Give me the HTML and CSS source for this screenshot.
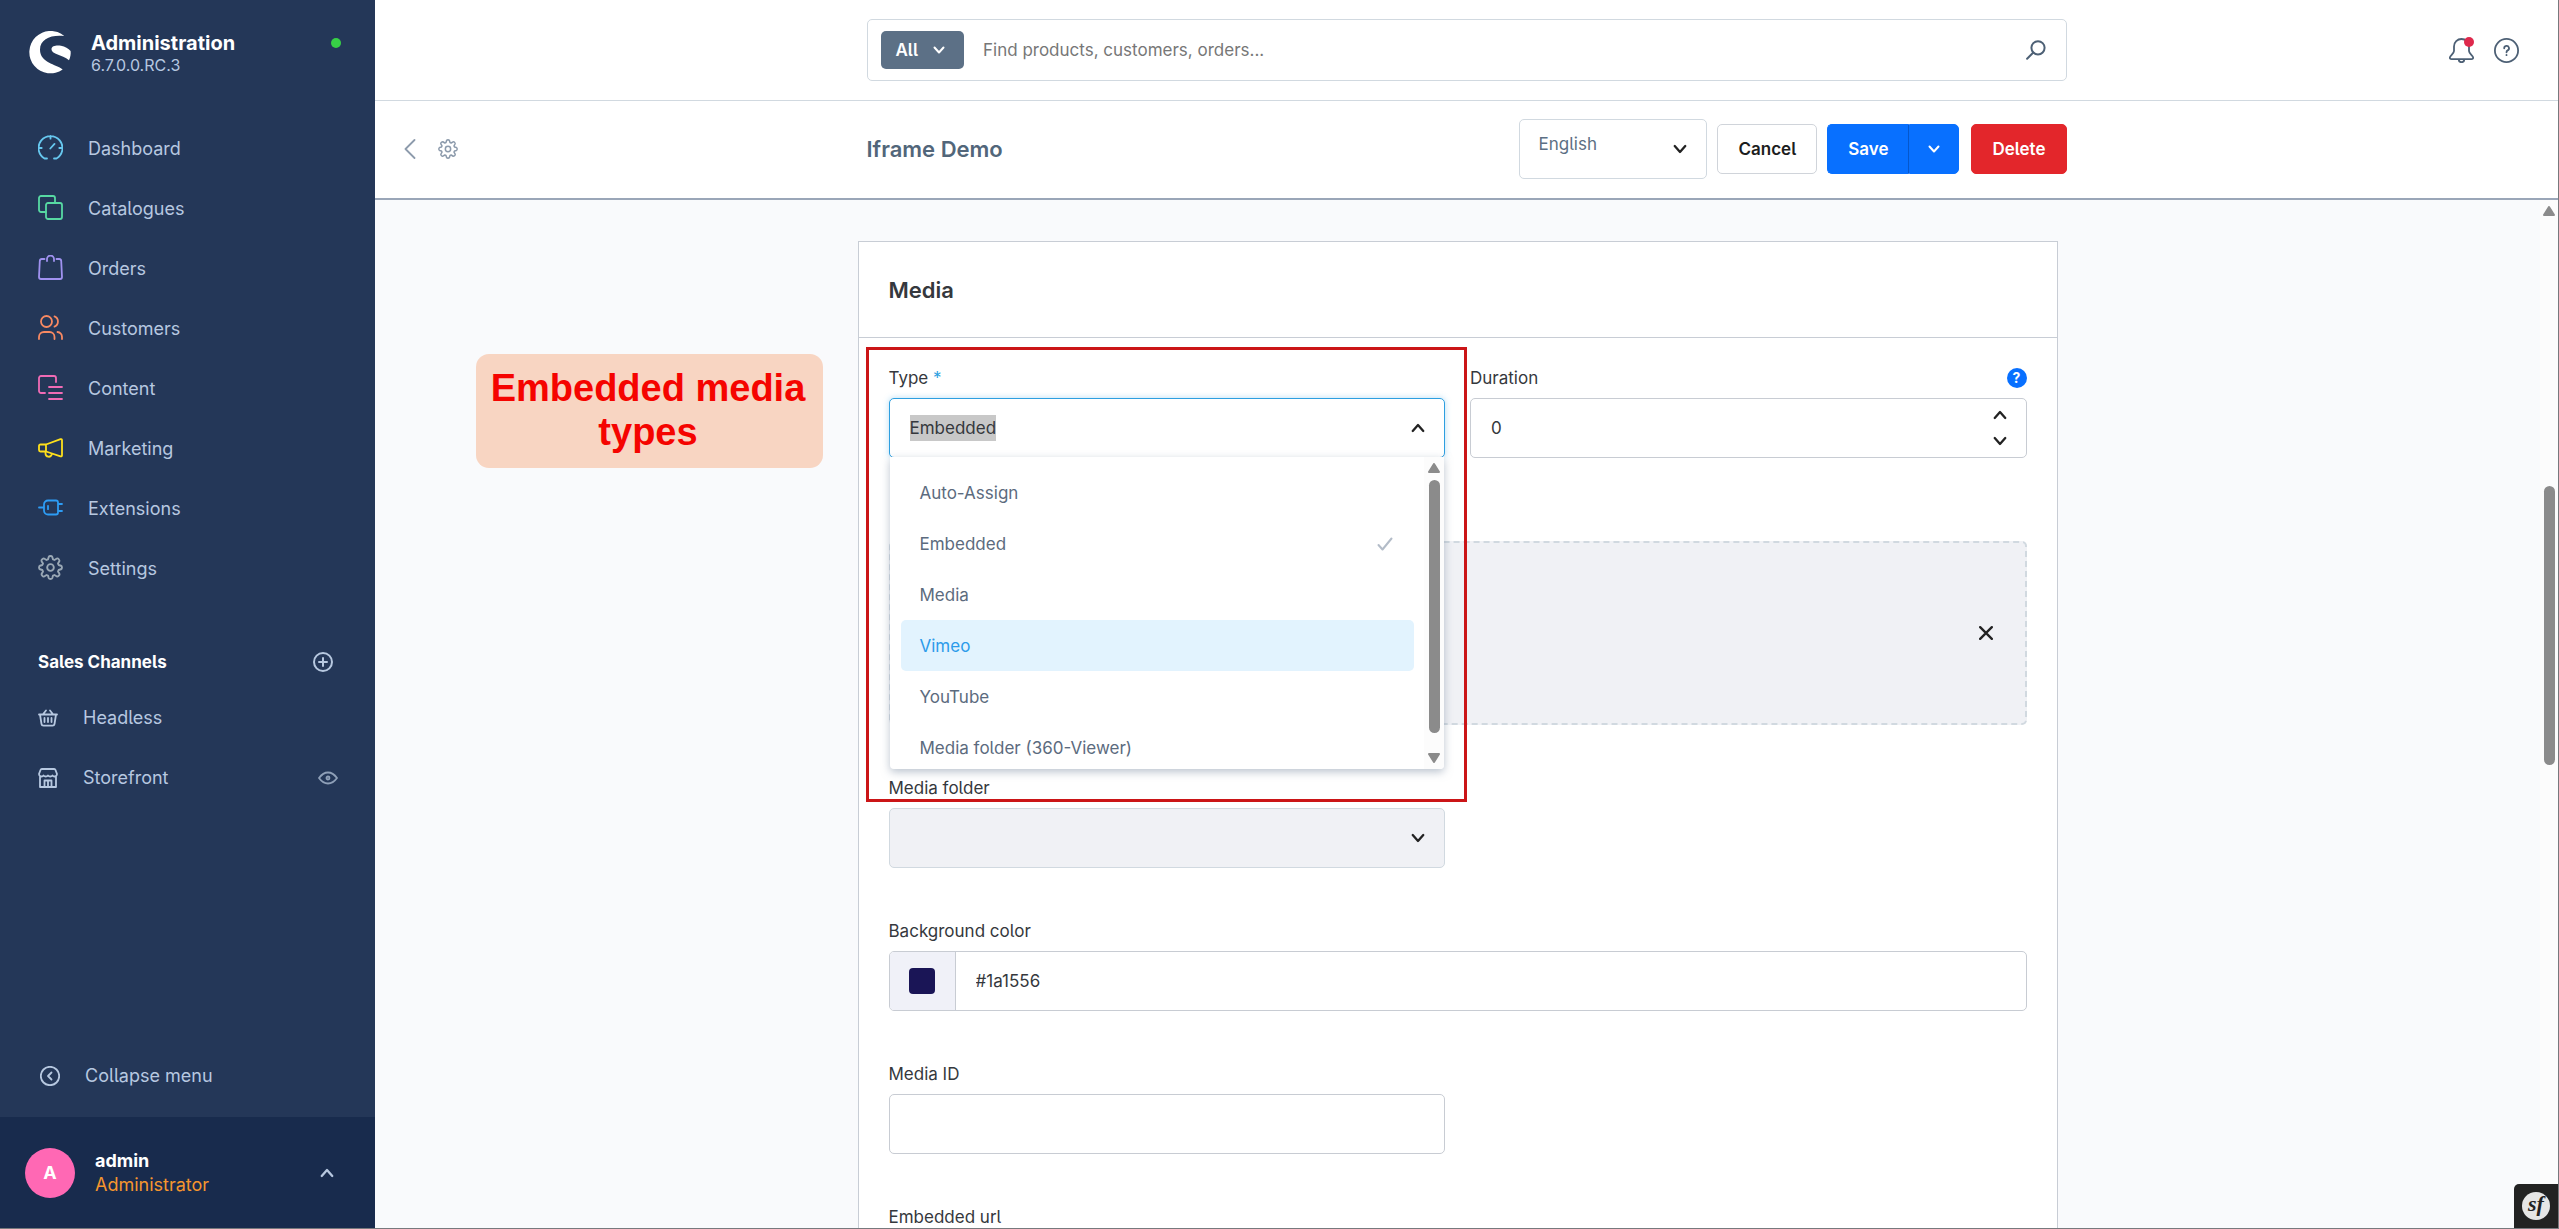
FILE: index.html
```html
<!DOCTYPE html>
<html lang="en">

<head>
    <meta charset="utf-8">
    <title>Iframe Demo | Administration</title>
    <link rel="stylesheet" href="styles.css">
</head>

<body>
    <svg class="sprite" aria-hidden="true">
        <symbol id="gear" viewBox="0 0 24 24">
            <path d="M9.6 4.2 10.3 1.9Q10.7 1 12 1t1.7.9l.7 2.3 1.4.6 2.3-1.4q.9-.5 1.8.7t.7 1.6l-1.4 2.5.6 1.4 2.3.7q.9.4.9 1.7t-.9 1.7l-2.3.7-.6 1.4 1.4 2.3q.5.9-.7 1.9t-1.7.7l-2.4-1.5-1.4.6-.7 2.3q-.4.9-1.7.9t-1.7-.9l-.7-2.3-1.4-.6-2.3 1.4q-.9.5-1.8-.7t-.7-1.6l1.4-2.5-.6-1.4-2.3-.7Q1 13.3 1 12t.9-1.7l2.3-.7.6-1.4-1.4-2.3q-.5-.9.7-1.9t1.7-.7l2.4 1.5z"/>
            <circle cx="12" cy="12" r="3.2"/>
        </symbol>
        <symbol id="chevron-down" viewBox="0 0 12 12"><path d="M1.5 3.5 6 8.5l4.5-5"/></symbol>
        <symbol id="chevron-up" viewBox="0 0 12 12"><path d="M1.5 8.5 6 3.5l4.5 5"/></symbol>
    </svg>

    <aside class="sidebar">
        <div class="brand">
            <svg class="logo" viewBox="0 0 42 43">
                <path d="M35.3 5A21.2 21.2 0 1 0 33.7 38.5C27 33 11 32 11 18.5 11 8 22 3.5 35.3 5z"/>
                <path d="M22.5 18c0-3 5-4 9.500-3.200 4 .8 7.500 2.700 9.600 5.200.4 3-.2 6-1.600 9.300-3.500-3-8-4.300-12-6-3-1.300-5.500-2.700-5.500-5.300z"/>
            </svg>
            <div class="brand-text">
                <strong>Administration</strong>
                <span>6.7.0.0.RC.3</span>
            </div>
            <i class="status"></i>
        </div>

        <nav class="menu">
            <a href="#" class="menu-item">
                <svg class="icon dashboard" viewBox="0 0 25 25"><path d="M9 23.500H6.500a12 12 0 1 1 12 0H16M12.500 1v2.700M1 13h2.700M21.300 13H24M12.300 13.500l4.200-4.600"/></svg>
                Dashboard
            </a>
            <a href="#" class="menu-item">
                <svg class="icon catalogues" viewBox="0 0 25 25"><path d="M8 17H3a2 2 0 0 1-2-2V3a2 2 0 0 1 2-2h12a2 2 0 0 1 2 2v5"/><rect x="8" y="8" width="16" height="16" rx="2"/></svg>
                Catalogues
            </a>
            <a href="#" class="menu-item">
                <svg class="icon orders" viewBox="0 0 25 25"><path d="M6.500 4H3.800a2 2 0 0 0-2 1.800L1 22a2 2 0 0 0 2 2h19a2 2 0 0 0 2-2L23.200 5.800a2 2 0 0 0-2-1.800h-2.700M9 6V4a3.500 3.500 0 0 1 7 0v2"/></svg>
                Orders
            </a>
            <a href="#" class="menu-item">
                <svg class="icon customers" viewBox="0 0 25 25"><circle cx="8.500" cy="6.500" r="5.500"/><path d="M1 24v-2a5 5 0 0 1 5-5h5.500a5 5 0 0 1 5 5v2M16.500 1.400a5.500 5.500 0 0 1 0 10.200M19.500 17a5 5 0 0 1 4.500 5v2"/></svg>
                Customers
            </a>
            <a href="#" class="menu-item">
                <svg class="icon contents" viewBox="0 0 25 25"><path d="M7 18H3a2 2 0 0 1-2-2V3a2 2 0 0 1 2-2h13a2 2 0 0 1 2 2v4M11 12h13M11 18h13M11 24h13"/></svg>
                Content
            </a>
            <a href="#" class="menu-item">
                <svg class="icon marketing" viewBox="0 0 25 25"><path d="M8 9.500 22.500 4.200Q24 3.800 24 5.300v14.900q0 1.500-1.500 1.100L8 16.500zM8 9.500H2.500Q1 9.500 1 11v4q0 1.500 1.500 1.500H8M7.500 16.800v1.700a3.200 3.200 0 0 0 6.300.8"/></svg>
                Marketing
            </a>
            <a href="#" class="menu-item">
                <svg class="icon extensions" viewBox="0 0 25 25"><path d="M1 12.500h5M10 5.500h8a2 2 0 0 1 2 2v10a2 2 0 0 1-2 2h-8a4 4 0 0 1-4-4v-6a4 4 0 0 1 4-4zM20 9h4M20 16h4M10 10.800v3.400"/></svg>
                Extensions
            </a>
            <a href="#" class="menu-item">
                <svg class="icon settings"><use href="#gear"/></svg>
                Settings
            </a>
        </nav>

        <div class="channels-head">
            <h2>Sales Channels</h2>
            <button class="plain" aria-label="Add sales channel">
                <svg class="icon-sm bold" viewBox="0 0 20 20"><circle cx="10" cy="10" r="9"/><path d="M10 6v8M6 10h8"/></svg>
            </button>
        </div>
        <nav class="channels">
            <a href="#" class="menu-item">
                <svg class="icon-sm" viewBox="0 0 20 20"><path d="M1 6.500h18M2 6.500 3.500 16a2 2 0 0 0 2 1.700h9a2 2 0 0 0 2-1.700L18 6.500M5 6.200 8 2.500M15 6.200l-3-3.700M6.500 10v4M10 10v4M13.500 10v4"/></svg>
                Headless
            </a>
            <a href="#" class="menu-item">
                <svg class="icon-sm" viewBox="0 0 20 20"><path d="M1 6 2.500 2a1.500 1.500 0 0 1 1.400-1h12.200a1.500 1.500 0 0 1 1.400 1L19 6a2.500 2.500 0 0 1-4.500 1.500 3 3 0 0 1-4.500 0 3 3 0 0 1-4.500 0A2.500 2.500 0 0 1 1 6zM2 8.500V19h16V8.500M6.500 19v-6.500h7V19M10 12.500V19"/></svg>
                Storefront
                <svg class="icon-sm eye" viewBox="0 0 20 20"><path d="M1 10q4-5.500 9-5.500t9 5.500q-4 5.500-9 5.500T1 10z"/><circle cx="10" cy="10" r="1.500"/></svg>
            </a>
        </nav>

        <button class="menu-item collapse">
            <svg class="icon-sm" viewBox="0 0 20 20"><circle cx="10" cy="10" r="9.200"/><path d="M11.500 6.500 8 10l3.500 3.500"/></svg>
            Collapse menu
        </button>

        <button class="user">
            <span class="avatar">A</span>
            <span class="user-text">
                <strong>admin</strong>
                <span>Administrator</span>
            </span>
            <svg class="chevron"><use href="#chevron-up"/></svg>
        </button>
    </aside>

    <div class="page">
        <header class="topbar">
            <form class="search">
                <button type="button" class="search-type">All <svg class="chevron small"><use href="#chevron-down"/></svg></button>
                <input type="text" aria-label="Search" placeholder="Find products, customers, orders...">
                <button type="button" class="plain" aria-label="Start search">
                    <svg class="icon-sm glass" viewBox="0 0 20 20"><circle cx="12" cy="7.800" r="6.600"/><path d="m7.300 12.500-6.200 6.200"/></svg>
                </button>
            </form>
            <div class="topbar-actions">
                <button class="plain bell" aria-label="Notifications">
                    <svg class="icon" viewBox="0 0 25 25"><path d="M12.500 1A7.500 7.500 0 0 0 5 8.500V13c0 2.500-3.800 4.500-4.100 6.300-.2 1.200.5 1.900 1.600 1.900h20c1.100 0 1.800-.7 1.600-1.900C23.800 17.500 20 15.500 20 13V8.500A7.500 7.500 0 0 0 12.500 1zM9.800 21.500a2.700 2.700 0 0 0 5.400 0"/></svg>
                    <i class="badge"></i>
                </button>
                <button class="plain" aria-label="Help">
                    <svg class="icon" viewBox="0 0 25 25"><circle cx="12.500" cy="12.500" r="11.600"/><path d="M10.200 10.300a2.400 2.400 0 1 1 3.500 2.100q-1.200.6-1.200 1.900M12.500 16.800v.4"/></svg>
                </button>
            </div>
        </header>

        <div class="smartbar">
            <div class="smartbar-back">
                <a href="#" aria-label="Back"><svg class="icon-sm" viewBox="0 0 20 20"><path d="M14.500 1 5.500 10l9 9"/></svg></a>
                <a href="#" aria-label="Settings"><svg class="icon-sm"><use href="#gear"/></svg></a>
            </div>
            <div class="smartbar-content">
                <h1>Iframe Demo</h1>
                <div class="select language">
                    <select aria-label="Language">
                        <option>English</option>
                    </select>
                    <svg class="chevron"><use href="#chevron-down"/></svg>
                </div>
                <button class="btn">Cancel</button>
                <div class="btn-group">
                    <button class="btn primary">Save</button>
                    <button class="btn primary" aria-label="More save options"><svg class="chevron small"><use href="#chevron-down"/></svg></button>
                </div>
                <button class="btn danger">Delete</button>
            </div>
        </div>

        <div class="scroll">
            <main class="content">
                <section class="card">
                    <h2>Media</h2>
                    <div class="card-body">
                        <div class="field">
                            <label for="type">Type <b>*</b></label>
                            <div class="control open">
                                <input id="type" class="marked" type="text" value="Embedded">
                                <svg class="chevron"><use href="#chevron-up"/></svg>
                                <div class="dropdown">
                                    <ul role="listbox" aria-label="Type">
                                        <li role="option">Auto-Assign</li>
                                        <li role="option" aria-selected="true">Embedded
                                            <svg class="check" viewBox="0 0 16 14"><path d="m1.500 8 4 4.500L14.500 1.500"/></svg>
                                        </li>
                                        <li role="option">Media</li>
                                        <li role="option" class="active">Vimeo</li>
                                        <li role="option">YouTube</li>
                                        <li role="option">Media folder (360-Viewer)</li>
                                    </ul>
                                    <div class="scrollbar">
                                        <svg class="arrow" viewBox="0 0 12 10"><path d="M6 1 11 9H1z"/></svg>
                                        <i class="thumb"></i>
                                        <svg class="arrow" viewBox="0 0 12 10"><path d="M6 9 1 1h10z"/></svg>
                                    </div>
                                </div>
                            </div>
                        </div>

                        <div class="field">
                            <div class="label-row">
                                <label for="duration">Duration</label>
                                <button class="help" aria-label="Help">?</button>
                            </div>
                            <div class="control">
                                <input id="duration" type="text" inputmode="numeric" value="0">
                                <div class="stepper">
                                    <button class="plain" aria-label="Increase"><svg class="chevron"><use href="#chevron-up"/></svg></button>
                                    <button class="plain" aria-label="Decrease"><svg class="chevron"><use href="#chevron-down"/></svg></button>
                                </div>
                            </div>
                        </div>

                        <div class="field wide dropzone-field">
                            <div class="dropzone">
                                <button class="plain" aria-label="Remove media">
                                    <svg class="chevron" viewBox="0 0 12 12"><path d="m1 1 10 10M11 1 1 11"/></svg>
                                </button>
                            </div>
                        </div>

                        <div class="field first">
                            <label for="folder">Media folder</label>
                            <div class="select disabled">
                                <select id="folder" disabled>
                                    <option></option>
                                </select>
                                <svg class="chevron"><use href="#chevron-down"/></svg>
                            </div>
                        </div>

                        <div class="field wide">
                            <label for="color">Background color</label>
                            <div class="control color">
                                <button class="swatch" aria-label="Pick color"><i></i></button>
                                <input id="color" type="text" value="#1a1556">
                            </div>
                        </div>

                        <div class="field first">
                            <label for="mediaId">Media ID</label>
                            <div class="control"><input id="mediaId" type="text"></div>
                        </div>

                        <div class="field first">
                            <label for="url">Embedded url</label>
                            <div class="control"><input id="url" type="text"></div>
                        </div>

                        <div class="highlight"></div>
                        <div class="note">Embedded media types</div>
                    </div>
                </section>
            </main>
            <div class="scrollbar page-scrollbar">
                <svg class="arrow" viewBox="0 0 12 10"><path d="M6 1 11 9H1z"/></svg>
                <i class="thumb"></i>
            </div>
        </div>
    </div>

    <button class="toolbar" aria-label="Show toolbar"><span>sf</span></button>
</body>

</html>
```

FILE: styles.css
```css
* {
    box-sizing: border-box;
}

body {
    margin: 0;
    height: 100vh;
    display: flex;
    overflow: hidden;
    position: relative;
    font-family: Inter, sans-serif;
    font-size: 17px;
    line-height: 26px;
    font-feature-settings: "cv05";
    color: #35383d;
    background: #f9fafc;
    border-right: 1px solid #77797d;
    border-bottom: 1px solid #77797d;
}

button,
input,
select {
    font: inherit;
    font-feature-settings: inherit;
    color: inherit;
}

button {
    padding: 0;
    cursor: pointer;
}

a {
    color: inherit;
    text-decoration: none;
}

h1,
h2 {
    margin: 0;
    font-size: 22px;
    font-weight: 600;
}

svg {
    display: block;
    flex: none;
    fill: none;
    stroke: currentColor;
    stroke-width: 1.8;
    stroke-linecap: round;
    stroke-linejoin: round;
}

.sprite {
    position: absolute;
    width: 0;
    height: 0;
}

.icon {
    width: 25px;
    height: 25px;
}

.icon-sm {
    width: 20px;
    height: 20px;
}

.bold {
    stroke-width: 2;
}

.chevron {
    width: 14px;
    height: 14px;
    stroke-width: 2;
}

.chevron.small {
    width: 12px;
    height: 12px;
}

.plain {
    display: flex;
    background: none;
    border: none;
}

/* Sidebar */
.sidebar {
    width: 375px;
    flex: none;
    display: flex;
    flex-direction: column;
    background: #243758;
    color: #b7c8e0;
    font-size: 18px;
}

.brand {
    height: 118px;
    padding: 31px 34px 0 29px;
    display: flex;
    align-items: flex-start;
}

.logo {
    width: 42px;
    height: 43px;
    fill: #fff;
    stroke: none;
}

.brand-text {
    flex: 1;
    display: flex;
    flex-direction: column;
    margin-left: 20px;
    font-size: 16px;
    line-height: 20px;
}

.brand-text strong {
    font-size: 20px;
    line-height: 24px;
    color: #fff;
}

.status {
    width: 10px;
    height: 10px;
    margin-top: 7px;
    border-radius: 50%;
    background: #37d046;
}

.menu-item {
    height: 60px;
    padding: 0 38px;
    display: flex;
    align-items: center;
    gap: 25px;
}

.menu .menu-item {
    padding-top: 2px;
}

.menu .icon {
    margin-bottom: 4px;
}

.dashboard { color: #67c8ef; }
.catalogues { color: #57d9a3; }
.orders { color: #a092f0; }
.customers { color: #f88962; }
.contents { color: #f06bb5; }
.marketing { color: #ffe01b; }
.extensions { color: #2d9cf4; }
.settings { color: #9aa8b5; }

.channels-head {
    height: 48px;
    margin: 40px 0 2px;
    padding: 0 42px 0 38px;
    display: flex;
    align-items: center;
    justify-content: space-between;
}

.channels-head h2 {
    font-size: 17px;
    font-weight: 700;
    color: #fff;
}

.channels .menu-item {
    padding-right: 37px;
}

.eye {
    margin-left: auto;
    color: #8fa0b8;
}

.collapse {
    margin: auto 0 11px;
    padding: 0 40px;
    background: none;
    border: none;
}

.user {
    height: 111px;
    padding: 0 41px 0 25px;
    display: flex;
    align-items: center;
    background: #182b4d;
    border: none;
    text-align: left;
}

.avatar {
    width: 50px;
    height: 50px;
    border-radius: 50%;
    background: #ff68b4;
    color: #fff;
    font-weight: 700;
    line-height: 50px;
    text-align: center;
}

.user-text {
    flex: 1;
    display: flex;
    flex-direction: column;
    margin-left: 20px;
    line-height: 24px;
    color: #f5962e;
}

.user-text strong {
    color: #fff;
}

/* Header */
.page {
    flex: 1;
    min-width: 0;
    display: flex;
    flex-direction: column;
}

.topbar,
.smartbar {
    flex: none;
    display: grid;
    grid-template-columns: 1fr minmax(0, 1200px) 1fr;
    align-items: center;
    background: #fff;
}

.topbar {
    height: 101px;
    border-bottom: 1px solid #d1d9e0;
}

.search {
    grid-column: 2;
    height: 62px;
    padding: 0 20px 0 13px;
    display: flex;
    align-items: center;
    gap: 15px;
    border: 1px solid #d1d9e0;
    border-radius: 5px;
}

.search input {
    flex: 1;
    padding: 0 4px;
    border: none;
    outline: none;
}

.search input::placeholder {
    color: #777;
}

.search-type {
    height: 38px;
    padding: 0 19px 0 15px;
    display: flex;
    align-items: center;
    gap: 15px;
    background: #5c7086;
    border: none;
    border-radius: 5px;
    color: #fff;
    font-weight: 600;
}

.glass {
    color: #4d6075;
    stroke-width: 2;
}

.topbar-actions {
    display: flex;
    justify-content: flex-end;
    gap: 20px;
    padding-right: 39px;
    color: #4d6075;
}

.bell {
    position: relative;
}

.badge {
    position: absolute;
    top: -1px;
    right: 0;
    width: 10px;
    height: 10px;
    border-radius: 50%;
    background: #de294c;
}

.smartbar {
    height: 99px;
    padding-bottom: 1px;
    border-bottom: 2px solid #9aa6b8;
}

.smartbar-back {
    display: flex;
    gap: 18px;
    padding-left: 25px;
    color: #8d9bac;
}

.smartbar-content {
    display: flex;
    align-items: center;
    gap: 10px;
}

.smartbar-content h1 {
    flex: 1;
    color: #52667a;
}

.btn {
    height: 50px;
    padding: 0 20px;
    background: #fff;
    border: 1px solid #d0d4da;
    border-radius: 5px;
    color: #1c1d20;
    font-weight: 600;
}

.btn-group {
    display: flex;
    margin-right: 2px;
}

.btn.primary {
    background: #0870ff;
    border-color: #0870ff;
    color: #fff;
}

.btn-group .btn:first-child {
    border-right-color: #0557cc;
    border-radius: 5px 0 0 5px;
}

.btn-group .btn:last-child {
    padding: 0 18px;
    border-radius: 0 5px 5px 0;
}

.btn.danger {
    background: #e3262b;
    border-color: #e3262b;
    color: #fff;
}

.select {
    height: 60px;
    display: grid;
    align-items: center;
}

.select select,
.select .chevron {
    grid-area: 1 / 1;
}

.select select {
    width: 100%;
    height: 100%;
    padding: 0 40px 0 18px;
    appearance: none;
    background: #fff;
    border: 1px solid #d1d9e0;
    border-radius: 5px;
}

.select .chevron {
    justify-self: end;
    margin-right: 20px;
    color: #222;
    pointer-events: none;
}

.select.disabled select {
    background: #f0f1f5;
    opacity: 1;
}

.language {
    width: 188px;
}

.language select {
    padding-bottom: 10px;
    color: #5c6f84;
}

/* Content */
.scroll {
    flex: 1;
    min-height: 0;
    display: flex;
    overflow: hidden;
}

.content {
    flex: 1;
    padding-top: 41px;
}

.card {
    max-width: 1200px;
    margin: 0 auto;
    background: #fff;
    border: 1px solid #c8cdd5;
}

.card h2 {
    height: 96px;
    padding: 0 30px;
    line-height: 96px;
    border-bottom: 1px solid #c8cdd5;
}

.card-body {
    position: relative;
    padding: 27px 30px;
    display: grid;
    grid-template-columns: 1fr 1fr;
    gap: 50px 25px;
}

.field {
    display: flex;
    flex-direction: column;
    gap: 7px;
}

.field.first {
    grid-column: 1;
}

.wide {
    grid-column: 1 / -1;
}

.field b {
    color: #2d9fe0;
    font-weight: 400;
}

.label-row {
    display: flex;
    align-items: center;
    justify-content: space-between;
}

.help {
    width: 20px;
    height: 20px;
    border: none;
    border-radius: 50%;
    background: #0870ff;
    color: #fff;
    font-size: 14px;
    font-weight: 700;
    line-height: 20px;
}

.control {
    position: relative;
    height: 60px;
    padding: 0 19px 0 20px;
    display: flex;
    align-items: center;
    justify-content: space-between;
    background: #fff;
    border: 1px solid #c8ccd3;
    border-radius: 5px;
    color: #222;
}

.control input {
    flex: 1;
    min-width: 0;
    padding: 0;
    background: none;
    border: none;
    outline: none;
    color: #35383d;
}

.control.open {
    border-color: #2d9fe0;
    box-shadow: 0 0 6px rgba(45, 159, 224, 0.35);
}

.control input.marked {
    flex: none;
    field-sizing: content;
    height: 26px;
    background: #c8c8c8;
}

.stepper {
    display: flex;
    flex-direction: column;
    gap: 12px;
}

.dropdown {
    position: absolute;
    z-index: 1;
    top: 58px;
    left: 0;
    right: 0;
    height: 312px;
    display: flex;
    overflow: hidden;
    background: #fff;
    border-radius: 0 0 4px 4px;
    box-shadow: 0 3px 8px rgba(120, 138, 160, 0.5);
}

.dropdown ul {
    flex: 1;
    margin: 0;
    padding: 10px 10px 10px 11px;
    list-style: none;
    color: #5c6b7e;
}

.dropdown li {
    height: 51px;
    padding: 0 21px 0 19px;
    display: flex;
    align-items: center;
    justify-content: space-between;
    border-radius: 5px;
}

.dropdown li.active {
    background: #e2f3fe;
    color: #2d9bea;
}

.check {
    width: 16px;
    height: 14px;
    color: #b3bcc8;
    stroke-width: 2;
}

.scrollbar {
    width: 20px;
    padding: 6px 0;
    display: flex;
    flex-direction: column;
    align-items: center;
    background: #fcfcfc;
}

.arrow {
    width: 12px;
    height: 10px;
    color: #8b8b8b;
    fill: currentColor;
    stroke-width: 2;
}

.thumb {
    width: 11px;
    border-radius: 6px;
    background: #8b8b8b;
}

.dropdown .thumb {
    height: 253px;
    margin: 7px 0 20px;
}

.page-scrollbar {
    width: 18px;
}

.page-scrollbar .thumb {
    height: 23%;
    min-height: 279px;
    margin-top: 270px;
}

.dropzone-field {
    padding-top: 33px;
}

.dropzone {
    height: 184px;
    padding-right: 32px;
    display: flex;
    align-items: center;
    justify-content: flex-end;
    background: #f0f1f5;
    border: 2px dashed #d1d9e0;
    border-radius: 5px;
    color: #222;
}

.control.color {
    padding-left: 0;
    gap: 20px;
}

.swatch {
    width: 66px;
    height: 100%;
    display: flex;
    align-items: center;
    justify-content: center;
    background: #f0f1f8;
    border: none;
    border-right: 1px solid #c8ccd3;
    border-radius: 4px 0 0 4px;
}

.swatch i {
    width: 26px;
    height: 26px;
    border-radius: 4px;
    background: #1a1556;
}

/* Annotations over the form */
.highlight {
    position: absolute;
    z-index: 2;
    top: 9px;
    left: 7px;
    width: 601px;
    height: 455px;
    border: 3px solid #cb1517;
    pointer-events: none;
}

.note {
    position: absolute;
    top: 16px;
    left: -383px;
    width: 347px;
    padding: 12px 12px 14px 10px;
    border-radius: 13px;
    background: #f8d5c2;
    color: #f50400;
    font: bold 38px/44px "Liberation Sans", Arial, sans-serif;
    text-align: center;
}

.toolbar {
    position: absolute;
    right: 0;
    bottom: 0;
    width: 44px;
    height: 44px;
    display: flex;
    align-items: center;
    justify-content: center;
    background: #222;
    border: none;
    border-radius: 5px 0 0 0;
}

.toolbar span {
    width: 28px;
    height: 28px;
    border-radius: 50%;
    background: #e6e6e6;
    color: #222;
    font: italic bold 22px/24px "Liberation Serif", serif;
    text-align: center;
}
```
